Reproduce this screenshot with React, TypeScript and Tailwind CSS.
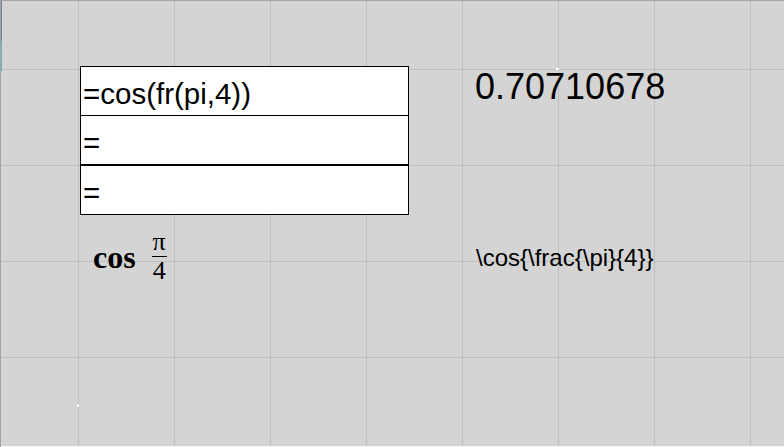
export default function App() {
  const cells = ['=cos(fr(pi,4))', '=', '='];

  return (
    <div className="relative w-[784px] h-[447px] overflow-hidden bg-[#d4d4d4] bg-[linear-gradient(to_right,#bfbfbf_1px,transparent_1px),linear-gradient(to_bottom,#bfbfbf_1px,transparent_1px)] bg-size-[96px_96px] bg-position-[77px_68px] border-t border-l border-[#a3a3a3] font-['Liberation_Sans',Arial,sans-serif] text-black">
      {/* window edge marks */}
      <div className="absolute left-0 top-0 w-px h-[40px] bg-[#6e7f90]" />
      <div className="absolute left-0 top-[40px] w-px h-[30px] bg-[#6fb0c8]" />
      <div className="absolute left-[76px] top-[403px] w-[2px] h-[3px] bg-white" />
      <div className="absolute left-[555px] top-[67px] w-[3px] h-[2px] bg-white" />
      <div className="absolute left-0 right-0 bottom-0 h-px bg-[#f4f4f4]" />

      <div className="flex pl-[79px] pt-[65px]">
        {/* input cells and rendered formula */}
        <div className="w-[329px]">
          <div className="border border-black bg-white">
            {cells.map((text, i) => (
              <div
                key={i}
                className={
                  i === 0
                    ? 'h-[49px] border-b border-black pl-[2px] pt-[7px] text-[29.5px] leading-[40px] whitespace-pre'
                    : i === 1
                      ? 'h-[50px] border-b-2 border-black pl-[2px] pt-[7px] text-[29.5px] leading-[40px]'
                      : 'h-[48px] pl-[2px] pt-[7px] text-[29.5px] leading-[40px]'
                }
              >
                {text}
              </div>
            ))}
          </div>

          <div className="flex items-start mt-[20px] pl-[13px] font-['Liberation_Serif','Times_New_Roman',serif]">
            <span className="mt-[6px] text-[32px] leading-[32px] font-bold">cos</span>
            <div className="ml-[16px] w-[15px] flex flex-col items-center">
              <span className="h-[14px] text-[26px] leading-[14px]">π</span>
              <div className="mt-[7px] h-px w-full bg-black" />
              <span className="text-[26px] leading-[28px]">4</span>
            </div>
          </div>
        </div>

        {/* evaluated value and LaTeX source */}
        <div className="ml-[66px]">
          <div className="mt-[3px] text-[36px] leading-none">0.70710678</div>
          <div className="mt-[141px] pl-px text-[24px] leading-none">{'\\cos{\\frac{\\pi}{4}}'}</div>
        </div>
      </div>
    </div>
  );
}
